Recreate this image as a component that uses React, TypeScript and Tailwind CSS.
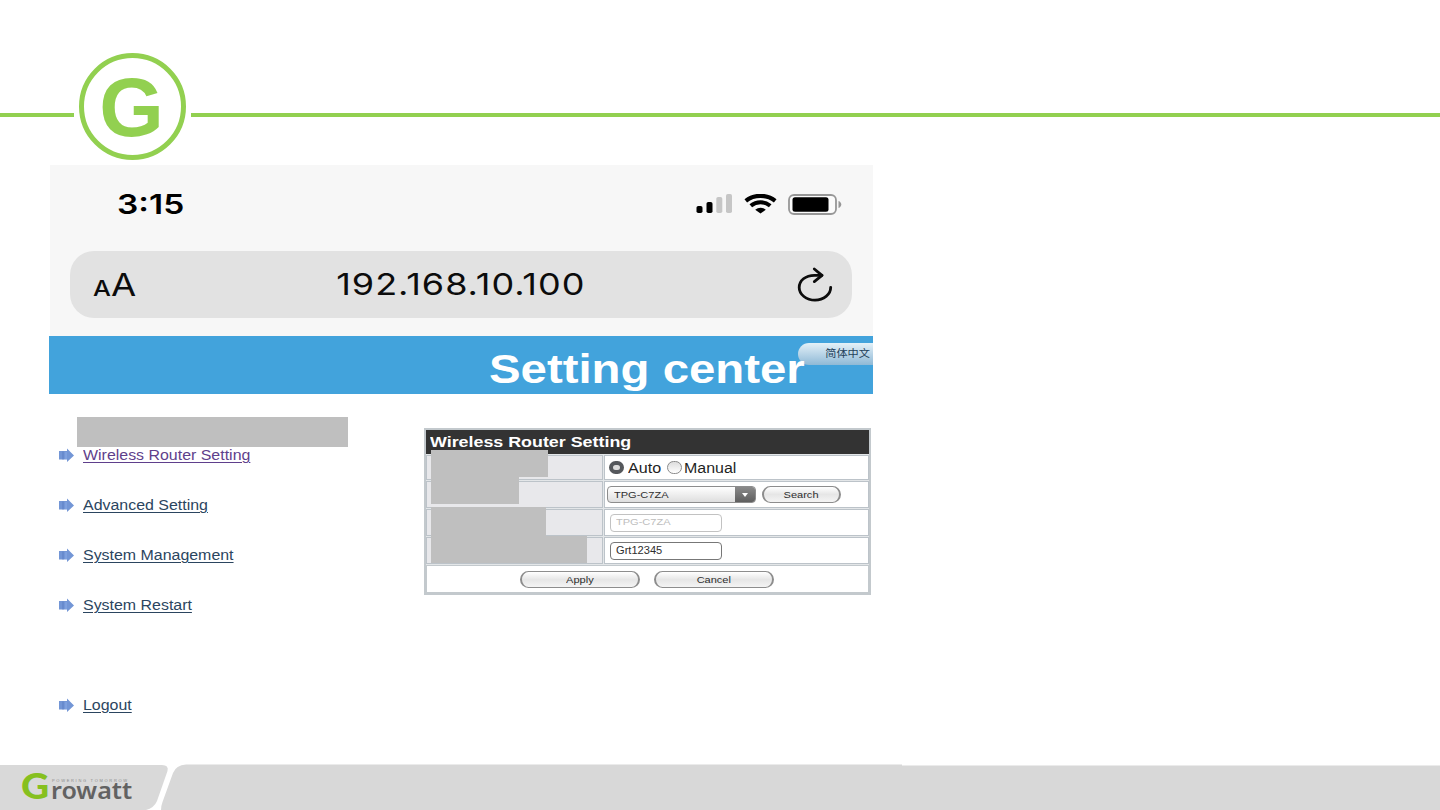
import React from 'react';

interface MenuLinkProps {
  label: string;
  visited?: boolean;
}

const ArrowIcon: React.FC = () => (
  <svg width="15" height="15" viewBox="0 0 15 15" className="shrink-0">
    <path d="M0 3H8V0.5L15 7.5L8 14V11.5H0Z" fill="#7396d6" />
    <path d="M4 3.5V11.5" stroke="#5c7fc4" strokeWidth="1" />
    <path d="M7 4V11" stroke="#8aabe8" strokeWidth="1" />
  </svg>
);

const SignalIcon: React.FC = () => (
  <svg width="37" height="20" viewBox="0 0 37 20">
    <rect x="0.5" y="12" width="6" height="7" rx="1.8" fill="#000" />
    <rect x="10.5" y="8" width="6" height="11" rx="1.8" fill="#000" />
    <rect x="20.3" y="3" width="6" height="16" rx="1.8" fill="#c6c6c6" />
    <rect x="30" y="0" width="6" height="19" rx="1.8" fill="#c6c6c6" />
  </svg>
);

const WifiIcon: React.FC = () => (
  <svg width="33" height="20" viewBox="0 0 33 20">
    <path d="M1.8 6.8C10 0.2 23 0.2 31.2 6.8" fill="none" stroke="#000" strokeWidth="4.2" />
    <path d="M6.8 11.8C12.5 7 20.5 7 26.2 11.8" fill="none" stroke="#000" strokeWidth="4" />
    <path d="M11.2 15.8C14.5 13 18.5 13 21.8 15.8L16.5 19.5Z" fill="#000" />
  </svg>
);

const BatteryIcon: React.FC = () => (
  <svg width="54" height="21" viewBox="0 0 54 21">
    <rect x="1" y="1" width="47" height="19" rx="5" fill="#fbfbfb" stroke="#979797" strokeWidth="1.8" />
    <rect x="4.5" y="3.2" width="36" height="14.6" rx="2.5" fill="#000" />
    <path d="M50.5 7C54.2 8.3 54.2 12.7 50.5 14Z" fill="#979797" />
  </svg>
);

const ReloadIcon: React.FC = () => (
  <svg width="36" height="36" viewBox="0 0 36 36" fill="none" stroke="#0c0c0c" strokeWidth="2.8" strokeLinecap="round" strokeLinejoin="round">
    <path d="M25 8.3H17.5C8.5 8.3 2.2 13.5 2.2 20.5C2.2 27.5 9.5 33.2 18 33.2C26.7 33.2 33.7 27.5 33.7 20.3" />
    <path d="M17.3 2L25 8.3L17.3 14.6" />
  </svg>
);

const MenuLink: React.FC<MenuLinkProps> = ({ label, visited }) => (
  <li className="flex items-center h-[50px] gap-[9px]">
    <ArrowIcon />
    <a
      href="#"
      className={
        'inline-block origin-left scale-x-[1.138] whitespace-nowrap text-[14px] leading-5 underline underline-offset-2 ' +
        (visited ? 'text-[#5f3f8c]' : 'text-[#2b4560]')
      }
    >
      {label}
    </a>
  </li>
);

const PillButton: React.FC<{ label: string; className: string }> = ({ label, className }) => (
  <button
    className={
      'flex items-center justify-center rounded-[10px] border border-[#8d8d8d] bg-linear-to-b from-white via-[#e6e6e6] to-[#f4f4f4] border-x-2 pt-px text-[9.5px] leading-none text-[#2e2e2e] ' +
      className
    }
  >
    <span className="inline-block scale-x-[1.16]">{label}</span>
  </button>
);

const SettingRow: React.FC<{ className: string; mask: string; children: React.ReactNode }> = ({ className, mask, children }) => (
  <div className={'flex gap-px ' + className}>
    <div className="relative w-[177px] bg-[#e8e8eb] border border-[#bcc3c9]">
      <div className={'absolute left-[4px] bg-[#bfbfbf] z-10 ' + mask} />
    </div>
    <div className="flex flex-1 items-center bg-white border border-[#bcc3c9]">{children}</div>
  </div>
);

const PhoneBar: React.FC = () => (
  <div className="ml-px h-[171px] w-[823px] bg-[#f7f7f7]">
    <div className="flex h-[86px] items-start justify-between pl-[67px] pr-[31px] pt-[28px]">
      <span className="mt-px inline-block origin-left scale-x-[1.24] font-['Inter'] text-[27px] font-semibold leading-[22px] text-black">3:15</span>
      <div className="flex items-start pt-px gap-[11px]">
        <SignalIcon />
        <WifiIcon />
        <BatteryIcon />
      </div>
    </div>
    <div className="ml-[20px] flex h-[67px] w-[782px] items-center justify-between rounded-[24px] bg-[#e2e2e2] pl-[23px] pr-[19px] font-['Inter'] text-[#0c0c0c]">
      <div className="flex w-[60px] items-baseline leading-none">
        <span className="inline-block w-[17.5px] origin-left scale-x-[1.2] text-[21px] font-medium">A</span>
        <span className="inline-block origin-left scale-x-[1.18] text-[31px]">A</span>
      </div>
      <span className="mr-[5px] mb-px inline-block scale-x-[1.2] text-[30px] leading-none tracking-[0.8px]">192.168.10.100</span>
      <div className="flex w-[60px] justify-end">
        <ReloadIcon />
      </div>
    </div>
  </div>
);

const RouterForm: React.FC = () => (
  <div className="mt-[34px] ml-[375px] flex h-[167px] w-[447px] flex-col gap-px border-2 border-[#c3c9cd] bg-[#e3e6e8]">
    <div className="flex h-[24px] items-center bg-[#333] pl-[4px]">
      <span className="inline-block origin-left scale-x-[1.19] whitespace-nowrap text-[15px] font-bold text-white">Wireless Router Setting</span>
    </div>
    <SettingRow className="h-[25px]" mask="-top-[6px] h-[27px] w-[117px]">
      <span className="ml-[4px] h-[13px] w-[15px] rounded-full border-4 border-[#55585c] bg-[#ddd]" />
      <span className="ml-[4px] mt-[2px] inline-block w-[39px] origin-left scale-x-[1.15] text-[14px]">Auto</span>
      <span className="h-[13px] w-[15px] rounded-full border border-[#8b8b8b] bg-linear-to-b from-[#ddd] to-white" />
      <span className="ml-[2px] mt-[2px] inline-block origin-left scale-x-[1.14] text-[14px]">Manual</span>
    </SettingRow>
    <SettingRow className="h-[27px]" mask="-top-[5px] h-[27px] w-[88px]">
      <div className="ml-[2px] flex h-[17px] w-[149px] items-center justify-between overflow-hidden rounded-[4px] border border-[#8d8d8d] bg-linear-to-b from-white to-[#dedede] pl-[6px]">
        <span className="inline-block origin-left scale-x-[1.16] text-[9.5px] leading-none text-[#2e2e2e]">TPG-C7ZA</span>
        <span className="flex h-full w-[20px] items-center justify-center bg-linear-to-b from-[#8a8a8a] to-[#5f5f5f]">
          <svg width="6" height="4" viewBox="0 0 6 4"><path d="M0 0H6L3 4Z" fill="#fff" /></svg>
        </span>
      </div>
      <PillButton label="Search" className="ml-[6px] h-[17px] w-[79px]" />
    </SettingRow>
    <SettingRow className="h-[27px]" mask="-top-[3px] h-[29px] w-[115px]">
      <div className="ml-[5px] flex h-[18px] w-[112px] items-center rounded-[4px] border border-[#c2c2c2] pb-[1px] pl-[5px]">
        <span className="inline-block origin-left scale-x-[1.16] text-[9.5px] leading-none text-[#bdbdbd]">TPG-C7ZA</span>
      </div>
    </SettingRow>
    <SettingRow className="h-[27px]" mask="-top-[2px] h-[27px] w-[156px]">
      <div className="ml-[5px] flex h-[18px] w-[112px] items-center rounded-[4px] border border-[#777] pl-[5px]">
        <span className="inline-block origin-left scale-x-[1.11] text-[10px] leading-none text-[#2e2e2e]">Grt12345</span>
      </div>
    </SettingRow>
    <div className="flex h-[28px] items-center gap-[14px] border border-[#c3c9cd] bg-white pl-[93px]">
      <PillButton label="Apply" className="h-[17px] w-[120px]" />
      <PillButton label="Cancel" className="h-[17px] w-[120px]" />
    </div>
  </div>
);

const Footer: React.FC = () => (
  <footer className="relative h-[46px] w-full">
    <svg width="1440" height="46" viewBox="0 0 1440 46" className="block">
      <path d="M0 1H162Q169 1 167.500 7L157 37Q154 44 146 46H0Z" fill="#d9d9d9" />
      <path d="M186 0.5H902V1.500H1440V46H161Q161 42 162.500 38L173 9Q176 1 186 0.5Z" fill="#d8d8d8" />
    </svg>
    <div className="absolute left-[21px] top-[3px] flex items-baseline leading-none">
      <span className="inline-block w-[30px] origin-left scale-x-[1.08] font-['Lato'] text-[36px] font-black text-[#86c01f]">G</span>
      <span className="inline-block origin-left scale-x-[1.09] font-['Noto_Sans'] text-[23px] font-semibold leading-[12px] text-[#626262]">rowatt</span>
    </div>
    <span className="absolute left-[52px] top-[15px] whitespace-nowrap text-[4px] leading-none tracking-[1.7px] text-[#8b8b8b]">POWERING TOMORROW</span>
  </footer>
);

const App: React.FC = () => (
  <div className="flex h-[810px] w-[1440px] flex-col overflow-hidden bg-white font-['Liberation_Sans',sans-serif] text-[#1f1f1f]">
    <header className="flex h-[165px] items-start gap-[5px] pt-[53px]">
      <div className="mt-[60px] h-[4px] w-[74px] bg-[#92d050]" />
      <div className="flex h-[107px] w-[107px] items-center justify-center rounded-full border-[5px] border-[#92d050]">
        <span className="mr-[2px] mt-px text-[83px] font-bold leading-none text-[#92d050]">G</span>
      </div>
      <div className="mt-[60px] h-[4px] flex-1 bg-[#92d050]" />
    </header>
    <main className="ml-[49px] h-[599px] w-[824px]">
      <PhoneBar />
      <div className="relative flex h-[58px] items-center overflow-hidden bg-[#42a3dc] pl-[440px]">
        <div className="absolute right-0 top-[7px] flex h-[22px] w-[75px] items-center justify-end rounded-l-full bg-linear-to-b from-[#e4f1f8] to-[#8fb9d6] pr-[3px] pb-[2px]">
          <span className="inline-block origin-right scale-x-[1.12] font-['Noto_Sans_CJK_SC',sans-serif] text-[10px] leading-none text-[#23415a]">简体中文</span>
        </div>
        <h1 className="relative mt-[8px] inline-block origin-left scale-x-[1.155] whitespace-nowrap text-[41px] font-bold leading-none text-white">Setting center</h1>
      </div>
      <div className="flex items-start">
        <nav className="relative w-0 pt-[36px]">
          <div className="absolute left-[28px] top-[23px] h-[30px] w-[271px] bg-[#bfbfbf]" />
          <ul className="w-[320px] pl-[10px]">
            <MenuLink label="Wireless Router Setting" visited />
            <MenuLink label="Advanced Setting" />
            <MenuLink label="System Management" />
            <MenuLink label="System Restart" />
            <li className="h-[50px]" />
            <MenuLink label="Logout" />
          </ul>
        </nav>
        <RouterForm />
      </div>
    </main>
    <Footer />
  </div>
);

export default App;
